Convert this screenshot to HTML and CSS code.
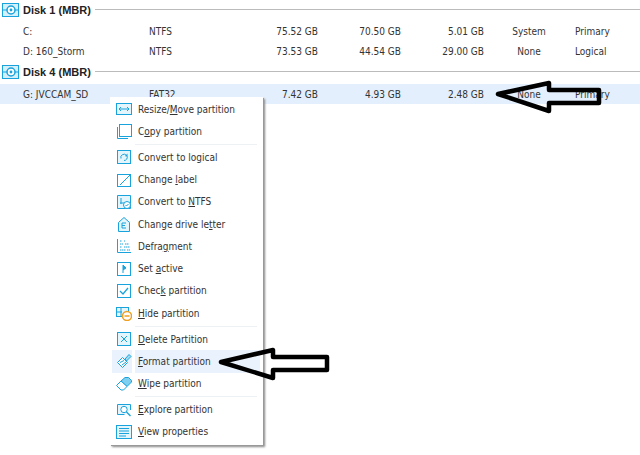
FILE: index.html
```html
<!DOCTYPE html>
<html lang="en">
<head>
  <meta charset="UTF-8" />
  <title>Partition list</title>
  <link rel="stylesheet" href="styles.css">
</head>
<body>
  <section class="disk">
    <h2 class="disk-title">
      <svg class="disk-icon" viewBox="0 0 17 14"><rect x="0.5" y="0.5" width="16" height="13" fill="#d6f0fb" stroke="#19a3dc"/><path d="M1 7h15" stroke="#19a3dc"/><circle cx="9" cy="7" r="4" fill="#fff" stroke="#19a3dc" stroke-width="1.5"/><circle cx="9" cy="7" r="1.4" fill="#19a3dc"/></svg>
      <span>Disk 1 (MBR)</span>
    </h2>
    <div class="row"><span>C:</span><span>NTFS</span><span class="num">75.52 GB</span><span class="num">70.50 GB</span><span class="num">5.01 GB</span><span class="status">System</span><span>Primary</span></div>
    <div class="row"><span>D: 160_Storm</span><span>NTFS</span><span class="num">73.53 GB</span><span class="num">44.54 GB</span><span class="num">29.00 GB</span><span class="status">None</span><span>Logical</span></div>
  </section>
  <section class="disk disk-second">
    <h2 class="disk-title">
      <svg class="disk-icon" viewBox="0 0 17 14"><rect x="0.5" y="0.5" width="16" height="13" fill="#d6f0fb" stroke="#19a3dc"/><path d="M1 7h15" stroke="#19a3dc"/><circle cx="9" cy="7" r="4" fill="#fff" stroke="#19a3dc" stroke-width="1.5"/><circle cx="9" cy="7" r="1.4" fill="#19a3dc"/></svg>
      <span>Disk 4 (MBR)</span>
    </h2>
    <div class="row row-selected"><span>G: JVCCAM_SD</span><span>FAT32</span><span class="num">7.42 GB</span><span class="num">4.93 GB</span><span class="num">2.48 GB</span><span class="status">None</span><span>Primary</span></div>
  </section>

  <ul class="menu">
    <li class="item">
      <svg viewBox="0 0 16 16"><rect x="0.5" y="2.5" width="15" height="11" fill="#e4f5fc" stroke="#19a3dc"/><path d="M3 8h10M5 6L3 8l2 2M11 6l2 2-2 2" fill="none" stroke="#19a3dc"/></svg>
      <span>Resize/<u>M</u>ove partition</span>
    </li>
    <li class="item">
      <svg viewBox="0 0 16 16"><path d="M1.500 4v11.500H12" fill="none" stroke="#19a3dc"/><rect x="3.500" y="1.500" width="12" height="12" fill="#fff" stroke="#19a3dc"/></svg>
      <span>C<u>o</u>py partition</span>
    </li>
    <li class="sep"></li>
    <li class="item">
      <svg viewBox="0 0 16 16"><rect x="1.5" y="1.5" width="13" height="13" fill="#e4f5fc" stroke="#19a3dc"/><path d="M5 9.5a3.2 3.2 0 0 1 5.4-3.2M11 7a3.2 3.2 0 0 1-3 4.5" fill="none" stroke="#19a3dc"/><path d="M11.5 4.5v2.7H8.8z" fill="#19a3dc"/></svg>
      <span>Convert to lo<u>g</u>ical</span>
    </li>
    <li class="item">
      <svg viewBox="0 0 16 16"><rect x="1.5" y="2.5" width="13" height="12" fill="#fff" stroke="#19a3dc"/><path d="M4 13L14 3" stroke="#19a3dc"/></svg>
      <span>Change <u>l</u>abel</span>
    </li>
    <li class="item">
      <svg viewBox="0 0 16 16"><path d="M1.5 1.5h13v13h-13z" fill="#e4f5fc" stroke="#19a3dc"/><path d="M5 4v6M4 9h5" stroke="#19a3dc"/><circle cx="11" cy="11" r="3.5" fill="#fff" stroke="#19a3dc"/><path d="M9.5 11l1 1 2-2" fill="none" stroke="#19a3dc"/></svg>
      <span>Convert to <u>N</u>TFS</span>
    </li>
    <li class="item">
      <svg viewBox="0 0 16 16"><path d="M2.5 15.5V6.5L8 1.5l5.5 5v9z" fill="#e4f5fc" stroke="#19a3dc"/><path d="M6 7h4M6 9.5h3M6 12h4M6 7v5" fill="none" stroke="#19a3dc"/></svg>
      <span>Change drive le<u>t</u>ter</span>
    </li>
    <li class="item">
      <svg viewBox="0 0 16 16"><path d="M1.5 1v13.5H15" fill="none" stroke="#19a3dc"/><path d="M4 3h2M8 3h1M4 6h3M9 6h4M4 9h2M8 9h6M4 12h6M11 12h3" stroke="#19a3dc" stroke-dasharray="1.500 .5"/></svg>
      <span>Defra<u>g</u>ment</span>
    </li>
    <li class="item">
      <svg viewBox="0 0 16 16"><rect x="1.5" y="1.5" width="13" height="13" fill="#fff" stroke="#19a3dc"/><path d="M7 4v8M7 4l3 3-3 2" fill="#19a3dc" stroke="#19a3dc"/></svg>
      <span>Set <u>a</u>ctive</span>
    </li>
    <li class="item">
      <svg viewBox="0 0 16 16"><rect x="1.5" y="1.5" width="13" height="13" fill="#fff" stroke="#19a3dc"/><path d="M4 8l3 3 5-6" fill="none" stroke="#19a3dc" stroke-width="1.3"/></svg>
      <span>Chec<u>k</u> partition</span>
    </li>
    <li class="item">
      <svg viewBox="0 0 16 16"><rect x="0.5" y="2.5" width="12" height="9" fill="#e4f5fc" stroke="#19a3dc"/><path d="M1 7h5M5 3v8" stroke="#19a3dc"/><circle cx="11" cy="11" r="4.5" fill="#fff" stroke="#f0a020" stroke-width="1.5"/><path d="M8.5 11h5" stroke="#f0a020" stroke-width="1.5"/></svg>
      <span><u>H</u>ide partition</span>
    </li>
    <li class="sep"></li>
    <li class="item">
      <svg viewBox="0 0 16 16"><rect x="1.5" y="1.5" width="13" height="13" fill="#e4f5fc" stroke="#19a3dc"/><path d="M5 5l6 6M11 5l-6 6" stroke="#19a3dc"/></svg>
      <span><u>D</u>elete Partition</span>
    </li>
    <li class="item item-active">
      <svg viewBox="0 0 16 16"><path d="M1.5 9.5l5-5 5 5-5 5z" fill="#fff" stroke="#19a3dc"/><path d="M4 9.5l4-2M6 12l4-3" stroke="#19a3dc"/><path d="M9 6l4-4.5 2 2L10.500 8z" fill="#9fdcf3" stroke="#19a3dc"/></svg>
      <span><u>F</u>ormat partition</span>
    </li>
    <li class="item">
      <svg viewBox="0 0 16 16"><path d="M5 5L9 1.500h3.500L15.500 4.500V6L11 10.500z" fill="#7fd0f0" stroke="#19a3dc"/><path d="M5 5L0.500 9.500 5 14h2.500l3.500-3.500z" fill="#fff" stroke="#19a3dc"/></svg>
      <span><u>W</u>ipe partition</span>
    </li>
    <li class="sep"></li>
    <li class="item">
      <svg viewBox="0 0 16 16"><path d="M14.500 8V2.500h-13v10h7" fill="#e4f5fc" stroke="#19a3dc"/><circle cx="8" cy="7.500" r="3.200" fill="#fff" stroke="#19a3dc"/><path d="M10.500 10l4 4" stroke="#19a3dc" stroke-width="1.500"/></svg>
      <span><u>E</u>xplore partition</span>
    </li>
    <li class="item">
      <svg viewBox="0 0 16 16"><rect x="0.500" y="1.500" width="15" height="13" fill="#e4f5fc" stroke="#19a3dc"/><path d="M3 4.500h10M3 7h10M3 9.500h10M3 12h7" stroke="#19a3dc"/></svg>
      <span><u>V</u>iew properties</span>
    </li>
  </ul>

  <!-- hand drawn arrows over the screenshot -->
  <svg class="arrow arrow-row" viewBox="0 0 110 36"><path d="M3 15L54 4v7h50v13H54v8z" fill="none" stroke="#000" stroke-width="4.500" stroke-linejoin="round"/></svg>
  <svg class="arrow arrow-menu" viewBox="0 0 112 36"><path d="M3 16L55 4v7h54v13H55v8z" fill="none" stroke="#000" stroke-width="4.500" stroke-linejoin="round"/></svg>
</body>
</html>
```

FILE: styles.css
```css
html, body {
  height: 100%;
}
body {
  margin: 0;
  position: relative;
  overflow: hidden;
  background: #fff;
  font-family: "DejaVu Sans", sans-serif;
  font-stretch: condensed;
  font-size: 10px;
  color: #333;
}

.disk-second {
  margin-top: 1px;
}
.disk-title {
  display: flex;
  align-items: center;
  height: 19px;
  margin: 0 0 2px;
  padding-left: 2px;
  font-family: "Liberation Sans", sans-serif;
  font-stretch: normal;
  font-size: 11px;
  font-weight: bold;
  color: #222;
}
.disk-second .disk-title {
  margin-bottom: 3px;
}
.disk-title::after {
  content: "";
  flex: 1;
  height: 1px;
  margin-left: 4px;
  background: #bbb;
}
.disk-icon {
  width: 17px;
  height: 14px;
  margin-right: 4px;
}

.row {
  display: grid;
  grid-template-columns: 126px 113px 56px 83px 83px 91px 1fr;
  align-items: center;
  height: 20px;
  padding-left: 23px;
  box-sizing: border-box;
  white-space: nowrap;
}
.row-selected {
  background: #e3effc;
}
.num {
  text-align: right;
}
.status {
  width: 46px;
  margin-left: 22px;
  text-align: center;
}

.menu {
  position: absolute;
  left: 110px;
  top: 97px;
  width: 153px;
  height: 348px;
  margin: 0;
  padding: 1px 0 0;
  box-sizing: border-box;
  list-style: none;
  background: #fff;
  box-shadow: 1px 1px 0 #999, 2px 2px 2px #888;
}
.item {
  display: flex;
  align-items: center;
  height: 22.25px;
  padding-left: 6px;
}
.item svg {
  width: 16px;
  height: 16px;
  flex: none;
  margin-right: 6px;
}
.item u {
  text-underline-offset: 1px;
}
.item-active {
  background: linear-gradient(to right, #fff 2px, #eaf3fd 2px, #eaf3fd 22px, #fff 22px, #fff 25px, #eaf3fd 25px, #eaf3fd 150px, #fff 150px);
}
.sep {
  height: 1px;
  margin: 1.500px 6px 1.250px 25px;
  background: #eef1f4;
}

.arrow {
  position: absolute;
}
.arrow-row {
  left: 495px;
  top: 79px;
  width: 110px;
  height: 36px;
}
.arrow-menu {
  left: 218px;
  top: 346px;
  width: 112px;
  height: 36px;
}
```
